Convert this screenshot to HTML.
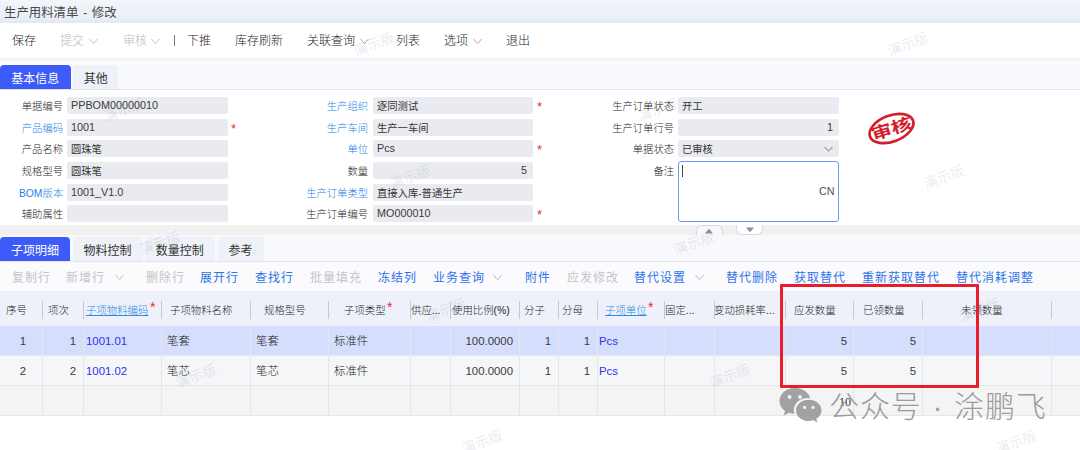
<!DOCTYPE html>
<html lang="zh-CN">
<head>
<meta charset="utf-8">
<title>生产用料清单 - 修改</title>
<style>
*{box-sizing:border-box;margin:0;padding:0}
html,body{width:1080px;height:450px;overflow:hidden;background:#fff}
body{position:relative;font-family:"Liberation Sans","Noto Sans CJK SC",sans-serif;color:#333;font-size:10.4px;font-weight:300}
.abs{position:absolute}
.t{position:absolute;white-space:nowrap;line-height:1}
/* title bar */
#titlebar{left:0;top:0;width:1080px;height:22.5px;background:linear-gradient(#f4f6fb 0%,#eef2fa 35%,#e9eef8 75%,#e3e8f5 100%)}
#titlebar .t{left:4px;top:6.5px;font-size:12.4px;color:#4a4a4a;font-weight:400;word-spacing:1.2px}
/* toolbar */
#toolbar{left:0;top:22.5px;width:1080px;height:35.8px;background:#fff}
#toolbar .t{top:12.5px;font-size:12px;color:#1c1c1c}
#toolbar .dis{color:#b9b9b9}
.chev{position:absolute;width:9px;height:7px}
/* gap */
#gap1{left:0;top:58.3px;width:1080px;height:31.7px;background:linear-gradient(#eceef4 0,#f6f7fb 2.5px,#f9fafd 4px)}
.tab{font-weight:400;position:absolute;height:24px;border-radius:4px 4px 0 0;font-size:12px;text-align:center;line-height:28px;color:#333;background:#eef1f8}
.tab.on{background:#3d5bf9;color:#fff}
#tabline1{left:0;top:89.25px;width:1080px;height:1px;background:#dfe3ee}
/* form */
#form{left:0;top:90px;width:1080px;height:135px;background:#fff}
.lab{position:absolute;white-space:nowrap;text-align:right;font-size:10.3px;line-height:19px;height:16px;color:#262626}
.lab.lk{color:#2284e4}
.inp{position:absolute;height:16.5px;background:#e9ebf0;border-radius:2px;font-size:10.3px;line-height:19px;padding:0 4px;color:#333;white-space:nowrap;font-weight:400}
.inp.en{font-size:10.8px;line-height:17.4px;color:#3a3a3a}
.inp.r{text-align:right;padding-right:6px}
.star{position:absolute;color:#ee2a33;font-size:13px;line-height:1}
/* gap2 */
#gap2{left:0;top:225px;width:1080px;height:10px;background:#f1f1f2}
#gap3{left:0;top:235px;width:1080px;height:27px;background:#f8f9fd}
#tabline2{left:0;top:261px;width:1080px;height:1px;background:#e0e5f2}
#subbar{left:0;top:262px;width:1080px;height:29px;background:#fbfbfe}
#subbar .t{font-weight:400;top:10px;font-size:12px;letter-spacing:1px;color:#2e72ea}
#subbar .dis{color:#c4c4c8}
/* grid */
#ghead{left:0;top:291px;width:1080px;height:35px;background:#eef1f9}
.hc{position:absolute;top:0;height:35px;line-height:40px;font-size:10.4px;color:#1e1e1e;white-space:nowrap;text-align:center}
.hc.lk{color:#2b8be4}
.hc.lk span.u{text-decoration:underline}
.sep{position:absolute;top:10px;width:1px;height:18px;background:#c6c8ce}
.row{position:absolute;left:0;width:1080px;height:30px}
.c{position:absolute;top:0;height:30px;line-height:30px;font-size:11.4px;color:#222;white-space:nowrap}
.c.r{text-align:right;color:#3c3c3c}
.c.ce{text-align:center;color:#3c3c3c}
.c.lk{color:#3232ee}
.vl{position:absolute;width:1px;background:#e5e6ea}
.hl{position:absolute;left:0;width:1080px;height:1px;background:#e5e6ea}
.wm{font-weight:400;position:absolute;white-space:nowrap;font-size:14px;color:rgba(90,100,130,0.14);transform:rotate(-20deg);line-height:1;width:42px;height:14px;z-index:5;pointer-events:none}
</style>
</head>
<body>
<!-- title -->
<div id="titlebar" class="abs"><div class="t">生产用料清单 - 修改</div></div>

<!-- toolbar -->
<div id="toolbar" class="abs">
  <div class="t" style="left:12px">保存</div>
  <div class="t dis" style="left:60px">提交</div>
  <svg class="chev" style="left:89px;top:15px" viewBox="0 0 9 7"><path d="M0.4 0.8 L4.5 5.8 L8.6 0.8" fill="none" stroke="#c4c4c4" stroke-width="1"/></svg>
  <div class="t dis" style="left:123px">审核</div>
  <svg class="chev" style="left:151px;top:15px" viewBox="0 0 9 7"><path d="M0.4 0.8 L4.5 5.8 L8.6 0.8" fill="none" stroke="#c4c4c4" stroke-width="1"/></svg>
  <div class="abs" style="left:174px;top:12.5px;width:1px;height:11px;background:#777"></div>
  <div class="t" style="left:187px">下推</div>
  <div class="t" style="left:235px">库存刷新</div>
  <div class="t" style="left:307px">关联查询</div>
  <svg class="chev" style="left:360px;top:15px" viewBox="0 0 9 7"><path d="M0.4 0.8 L4.5 5.8 L8.6 0.8" fill="none" stroke="#aaa" stroke-width="1"/></svg>
  <div class="t" style="left:396px">列表</div>
  <div class="t" style="left:444px">选项</div>
  <svg class="chev" style="left:473px;top:15px" viewBox="0 0 9 7"><path d="M0.4 0.8 L4.5 5.8 L8.6 0.8" fill="none" stroke="#aaa" stroke-width="1"/></svg>
  <div class="t" style="left:506px">退出</div>
</div>

<!-- tabs 1 -->
<div id="gap1" class="abs">
  <div class="tab on" style="left:0;top:6.7px;width:70.5px;height:24.3px">基本信息</div>
  <div class="tab" style="left:73px;top:6.7px;width:45.4px;height:24.3px">其他</div>
</div>
<div id="tabline1" class="abs"></div>

<!-- form -->
<div id="form" class="abs">
  <!-- col 1 -->
  <div class="lab" style="left:0;width:63px;top:7px">单据编号</div>
  <div class="inp en" style="left:67px;width:161px;top:7px">PPBOM00000010</div>
  <div class="lab lk" style="left:0;width:63px;top:29px">产品编码</div>
  <div class="inp en" style="left:67px;width:161px;top:29px">1001</div>
  <div class="star" style="left:231px;top:31.5px">*</div>
  <div class="lab" style="left:0;width:63px;top:50px">产品名称</div>
  <div class="inp" style="left:67px;width:161px;top:50px">圆珠笔</div>
  <div class="lab" style="left:0;width:63px;top:72px">规格型号</div>
  <div class="inp" style="left:67px;width:161px;top:72px">圆珠笔</div>
  <div class="lab lk" style="left:0;width:63px;top:94px">BOM版本</div>
  <div class="inp en" style="left:67px;width:161px;top:94px">1001_V1.0</div>
  <div class="lab" style="left:0;width:63px;top:115px">辅助属性</div>
  <div class="inp" style="left:67px;width:161px;top:115px"></div>
  <!-- col 2 -->
  <div class="lab lk" style="left:290px;width:78px;top:7px">生产组织</div>
  <div class="inp" style="left:373px;width:160px;top:7px">逐同测试</div>
  <div class="star" style="left:537px;top:9.5px">*</div>
  <div class="lab lk" style="left:290px;width:78px;top:29px">生产车间</div>
  <div class="inp" style="left:373px;width:160px;top:29px">生产一车间</div>
  <div class="lab lk" style="left:290px;width:78px;top:50px">单位</div>
  <div class="inp en" style="left:373px;width:160px;top:50px">Pcs</div>
  <div class="star" style="left:537px;top:52.5px">*</div>
  <div class="lab" style="left:290px;width:78px;top:72px">数量</div>
  <div class="inp r en" style="left:373px;width:160px;top:72px">5</div>
  <div class="lab lk" style="left:290px;width:78px;top:94px">生产订单类型</div>
  <div class="inp" style="left:373px;width:160px;top:94px">直接入库-普通生产</div>
  <div class="lab" style="left:290px;width:78px;top:115px">生产订单编号</div>
  <div class="inp en" style="left:373px;width:160px;top:115px">MO000010</div>
  <div class="star" style="left:537px;top:117.5px">*</div>
  <!-- col 3 -->
  <div class="lab" style="left:596px;width:78px;top:7px">生产订单状态</div>
  <div class="inp" style="left:678px;width:161px;top:7px">开工</div>
  <div class="lab" style="left:596px;width:78px;top:29px">生产订单行号</div>
  <div class="inp r en" style="left:678px;width:161px;top:29px">1</div>
  <div class="lab" style="left:596px;width:78px;top:50px">单据状态</div>
  <div class="inp" style="left:678px;width:161px;top:50px">已审核</div>
  <svg class="abs" style="left:824px;top:56px;width:9px;height:7px" viewBox="0 0 9 7"><path d="M0.5 1 L4.5 5 L8.5 1" fill="none" stroke="#a2a5ad" stroke-width="1.2"/></svg>
  <div class="lab" style="left:596px;width:78px;top:72px">备注</div>
  <div class="abs ta" style="left:678px;top:70.8px;width:161px;height:61.2px;border:1px solid #6d99f6;border-radius:3px;background:#fff"></div>
  <div class="abs" style="left:682px;top:75px;width:1px;height:12px;background:#444"></div>
  <div class="t" style="left:819px;top:96px;font-size:10.8px;color:#505050">CN</div>
  <!-- stamp -->
  <svg class="abs" style="left:860px;top:14px;width:64px;height:48px" viewBox="0 0 64 48">
    <g transform="translate(31.5,24.5) rotate(-21)">
      <ellipse cx="0" cy="0" rx="23" ry="13" fill="none" stroke="#d41c2a" stroke-width="2.7"/>
      <text transform="rotate(3) scale(1.13,0.86)" x="0" y="6.9" text-anchor="middle" font-family="'Liberation Sans','Noto Sans CJK SC',sans-serif" font-weight="700" font-size="18.5" fill="#d41c2a">审核</text>
    </g>
  </svg>
</div>

<!-- gap + collapse handles -->
<div id="gap2" class="abs"></div>
<div id="gap3" class="abs"></div>
<div class="abs" style="left:696px;top:225px;width:27px;height:10px;border:1px solid #d6d8df;border-bottom:none;border-radius:6px 6px 0 0;background:#f8f8fa"></div>
<svg class="abs" style="left:704px;top:228px;width:10px;height:6px" viewBox="0 0 10 6"><path d="M1 5.5 L5 0.8 L9 5.5 Z" fill="#8a90ab"/></svg>
<div class="abs" style="left:736px;top:225px;width:27px;height:10px;border:1px solid #d6d8df;border-top:none;border-radius:0 0 6px 6px;background:#fff"></div>
<svg class="abs" style="left:744.5px;top:227px;width:10px;height:6px" viewBox="0 0 10 6"><path d="M1 0.5 L5 5.2 L9 0.5 Z" fill="#8a90ab"/></svg>

<!-- tabs 2 -->
<div class="tab on" style="left:0;top:237px;width:70px">子项明细</div>
<div class="tab" style="left:72.5px;top:237px;width:70px">物料控制</div>
<div class="tab" style="left:144.5px;top:237px;width:70.5px">数量控制</div>
<div class="tab" style="left:217.5px;top:237px;width:46px">参考</div>
<div id="tabline2" class="abs"></div>

<!-- sub toolbar -->
<div id="subbar" class="abs">
  <div class="t dis" style="left:12px">复制行</div>
  <div class="t dis" style="left:66px">新增行</div>
  <svg class="chev" style="left:115px;top:12px" viewBox="0 0 9 7"><path d="M0.4 0.8 L4.5 5.8 L8.6 0.8" fill="none" stroke="#c4c4c4" stroke-width="1"/></svg>
  <div class="t dis" style="left:146px">删除行</div>
  <div class="t" style="left:200px">展开行</div>
  <div class="t" style="left:255px">查找行</div>
  <div class="t dis" style="left:310px">批量填充</div>
  <div class="t" style="left:378px">冻结列</div>
  <div class="t" style="left:433px">业务查询</div>
  <svg class="chev" style="left:493px;top:12px" viewBox="0 0 9 7"><path d="M0.4 0.8 L4.5 5.8 L8.6 0.8" fill="none" stroke="#b4b8c4" stroke-width="1"/></svg>
  <div class="t" style="left:525px">附件</div>
  <div class="t dis" style="left:567px">应发修改</div>
  <div class="t" style="left:634px">替代设置</div>
  <svg class="chev" style="left:695px;top:12px" viewBox="0 0 9 7"><path d="M0.4 0.8 L4.5 5.8 L8.6 0.8" fill="none" stroke="#b4b8c4" stroke-width="1"/></svg>
  <div class="t" style="left:726px">替代删除</div>
  <div class="t" style="left:794px">获取替代</div>
  <div class="t" style="left:862px">重新获取替代</div>
  <div class="t" style="left:956px">替代消耗调整</div>
</div>

<!-- grid header -->
<div id="ghead" class="abs">
  <div class="hc" style="left:6px;text-align:left">序号</div>
  <div class="hc" style="left:48px;text-align:left">项次</div>
  <div class="hc lk" style="left:86px;text-align:left"><span class="u">子项物料编码</span></div>
  <div class="star" style="left:150px;top:9px;font-size:14px">*</div>
  <div class="hc" style="left:170px;text-align:left">子项物料名称</div>
  <div class="hc" style="left:264px;text-align:left">规格型号</div>
  <div class="hc" style="left:344px;text-align:left">子项类型</div>
  <div class="star" style="left:387px;top:9px;font-size:14px">*</div>
  <div class="hc" style="left:411px;text-align:left">供应...</div>
  <div class="hc" style="left:452px;text-align:left">使用比例(%)</div>
  <div class="hc" style="left:524px;text-align:left">分子</div>
  <div class="hc" style="left:562px;text-align:left">分母</div>
  <div class="hc lk" style="left:605px;text-align:left"><span class="u">子项单位</span></div>
  <div class="star" style="left:648px;top:9px;font-size:14px">*</div>
  <div class="hc" style="left:665px;text-align:left">固定...</div>
  <div class="hc" style="left:714px;text-align:left">变动损耗率...</div>
  <div class="hc" style="left:794px;text-align:left">应发数量</div>
  <div class="hc" style="left:863px;text-align:left">已领数量</div>
  <div class="hc" style="left:961px;text-align:left">未领数量</div>
  <div class="sep" style="left:42px"></div>
  <div class="sep" style="left:83px"></div>
  <div class="sep" style="left:161px"></div>
  <div class="sep" style="left:250px"></div>
  <div class="sep" style="left:328px"></div>
  <div class="sep" style="left:410px"></div>
  <div class="sep" style="left:450px"></div>
  <div class="sep" style="left:519px"></div>
  <div class="sep" style="left:558px"></div>
  <div class="sep" style="left:597px"></div>
  <div class="sep" style="left:664px"></div>
  <div class="sep" style="left:714px"></div>
  <div class="sep" style="left:785px"></div>
  <div class="sep" style="left:853px"></div>
  <div class="sep" style="left:922px"></div>
  <div class="sep" style="left:1051px"></div>
</div>

<!-- rows -->
<div class="row" style="top:326px;background:#d5defc">
  <div class="c ce" style="left:0;width:46px">1</div>
  <div class="c r" style="left:42px;width:34px">1</div>
  <div class="c lk" style="left:86px">1001.01</div>
  <div class="c" style="left:167px">笔套</div>
  <div class="c" style="left:256px">笔套</div>
  <div class="c" style="left:334px">标准件</div>
  <div class="c r" style="left:450px;width:63px">100.0000</div>
  <div class="c r" style="left:519px;width:32px">1</div>
  <div class="c r" style="left:558px;width:32px">1</div>
  <div class="c lk" style="left:599px">Pcs</div>
  <div class="c r" style="left:785px;width:62px">5</div>
  <div class="c r" style="left:853px;width:63px">5</div>
</div>
<div class="row" style="top:356px;background:#f5f6f8">
  <div class="c ce" style="left:0;width:46px">2</div>
  <div class="c r" style="left:42px;width:34px">2</div>
  <div class="c lk" style="left:86px">1001.02</div>
  <div class="c" style="left:167px">笔芯</div>
  <div class="c" style="left:256px">笔芯</div>
  <div class="c" style="left:334px">标准件</div>
  <div class="c r" style="left:450px;width:63px">100.0000</div>
  <div class="c r" style="left:519px;width:32px">1</div>
  <div class="c r" style="left:558px;width:32px">1</div>
  <div class="c lk" style="left:599px">Pcs</div>
  <div class="c r" style="left:785px;width:62px">5</div>
  <div class="c r" style="left:853px;width:63px">5</div>
</div>
<div class="row" style="top:386px;background:#f4f4f5">
  <div class="t" style="left:839px;top:10px;font-family:'Liberation Serif',serif;font-size:12px;color:#333">10</div>
</div>
<!-- grid lines -->
<div class="hl" style="top:355px;background:#e4e6ee"></div>
<div class="hl" style="top:385px"></div>
<div class="hl" style="top:415px"></div>
<div id="vlines">
<div class="vl" style="left:42px;top:326px;height:90px"></div>
<div class="vl" style="left:83px;top:326px;height:90px"></div>
<div class="vl" style="left:161px;top:326px;height:90px"></div>
<div class="vl" style="left:250px;top:326px;height:90px"></div>
<div class="vl" style="left:328px;top:326px;height:90px"></div>
<div class="vl" style="left:410px;top:326px;height:90px"></div>
<div class="vl" style="left:450px;top:326px;height:90px"></div>
<div class="vl" style="left:519px;top:326px;height:90px"></div>
<div class="vl" style="left:558px;top:326px;height:90px"></div>
<div class="vl" style="left:597px;top:326px;height:90px"></div>
<div class="vl" style="left:664px;top:326px;height:90px"></div>
<div class="vl" style="left:714px;top:326px;height:90px"></div>
<div class="vl" style="left:785px;top:326px;height:90px"></div>
<div class="vl" style="left:853px;top:326px;height:90px"></div>
<div class="vl" style="left:922px;top:326px;height:90px"></div>
<div class="vl" style="left:1051px;top:326px;height:90px"></div>
</div>

<!-- red highlight box -->
<div class="abs" style="left:780px;top:284px;width:199px;height:104px;border:3.2px solid #e81f2a;border-radius:1px"></div>

<!-- big watermark -->
<svg class="abs" style="left:778px;top:386px;width:46px;height:38px" viewBox="0 0 46 38">
  <g fill="#9c9c9c" opacity="0.92">
    <path d="M17 2 C8 2 1.5 7.8 1.5 15 C1.5 19 3.6 22.6 7 25 L5.6 29.6 L11 26.8 C12.8 27.4 14.6 27.8 16.4 27.8 C16 26.6 15.8 25.4 15.8 24.2 C15.8 17.4 22 12 29.8 12 C30.6 12 31.4 12.06 32.2 12.2 C30.8 6.3 24.5 2 17 2 Z"/>
    <path d="M43.5 24.4 C43.5 18.6 37.8 13.8 30.8 13.8 C23.6 13.8 18 18.6 18 24.4 C18 30.2 23.6 35 30.8 35 C32.3 35 33.8 34.7 35.2 34.3 L39.4 36.6 L38.3 32.8 C41.4 30.8 43.5 27.8 43.5 24.4 Z"/>
  </g>
  <g fill="#f4f4f5">
    <circle cx="11.6" cy="11" r="1.9"/><circle cx="22" cy="11" r="1.9"/>
    <circle cx="26.6" cy="21.4" r="1.6"/><circle cx="35" cy="21.4" r="1.6"/>
  </g>
</svg>
<div class="t" style="left:829px;top:392px;font-size:30px;color:#9c9c9c;letter-spacing:0.9px;word-spacing:1.5px">公众号 · 涂鹏飞</div>

<!-- small watermarks -->
<div class="wm" style="left:353px;top:37px">演示版</div>
<div class="wm" style="left:887px;top:37px">演示版</div>
<div class="wm" style="left:103px;top:103.3px">演示版</div>
<div class="wm" style="left:637px;top:103.3px">演示版</div>
<div class="wm" style="left:389px;top:169.5px">演示版</div>
<div class="wm" style="left:923px;top:169.5px">演示版</div>
<div class="wm" style="left:139px;top:236px">演示版</div>
<div class="wm" style="left:672.5px;top:236px">演示版</div>
<div class="wm" style="left:425px;top:302.5px">演示版</div>
<div class="wm" style="left:959px;top:302.5px">演示版</div>
<div class="wm" style="left:175px;top:368.5px">演示版</div>
<div class="wm" style="left:709px;top:368.5px">演示版</div>
<div class="wm" style="left:461px;top:435px">演示版</div>
<div class="wm" style="left:995px;top:435px">演示版</div>

</body>
</html>
